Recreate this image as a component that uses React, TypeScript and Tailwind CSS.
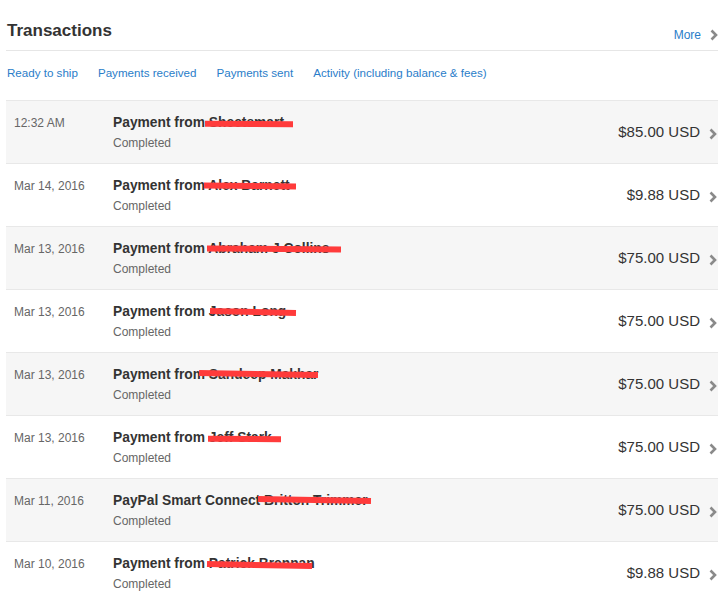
import React from "react";

type Row = {
  date: string;
  prefix: string;
  name: string;
  amount: string;
  bar: { x1: number; x2: number; top: number; rot: number };
};

const rows: Row[] = [
  { date: "12:32 AM", prefix: "Payment from ", name: "Sheetsmart", amount: "$85.00 USD", bar: { x1: 205, x2: 293, top: 6, rot: 0.4 } },
  { date: "Mar 14, 2016", prefix: "Payment from ", name: "Alex Barnett", amount: "$9.88 USD", bar: { x1: 204, x2: 296, top: 5, rot: 0.5 } },
  { date: "Mar 13, 2016", prefix: "Payment from ", name: "Abraham J Collins", amount: "$75.00 USD", bar: { x1: 207, x2: 341, top: 5, rot: 0.5 } },
  { date: "Mar 13, 2016", prefix: "Payment from ", name: "Jason Long", amount: "$75.00 USD", bar: { x1: 210, x2: 296, top: 5, rot: 1.2 } },
  { date: "Mar 13, 2016", prefix: "Payment from ", name: "Sandeep Makhar", amount: "$75.00 USD", bar: { x1: 199, x2: 318, top: 4, rot: 1 } },
  { date: "Mar 13, 2016", prefix: "Payment from ", name: "Jeff Stark", amount: "$75.00 USD", bar: { x1: 208, x2: 281, top: 6, rot: 0.5 } },
  { date: "Mar 11, 2016", prefix: "PayPal Smart Connect ", name: "Britton Trimmer", amount: "$75.00 USD", bar: { x1: 258, x2: 371, top: 4, rot: 1 } },
  { date: "Mar 10, 2016", prefix: "Payment from ", name: "Patrick Brennan", amount: "$9.88 USD", bar: { x1: 207, x2: 312, top: 6, rot: 1 } },
];

function Chevron({ className = "" }: { className?: string }) {
  return (
    <svg width="8" height="12" viewBox="0 0 8 12" className={className}>
      <path d="M1.5 1.5 L6 6 L1.5 10.5" fill="none" stroke="#8a8a8a" strokeWidth="2.6" strokeLinecap="butt" strokeLinejoin="miter" />
    </svg>
  );
}

export default function App() {
  return (
    <div
      className="w-[728px] h-[608px] bg-white overflow-hidden text-[#333]"
      style={{ fontFamily: '"Liberation Sans", Arial, sans-serif' }}
    >
      <div className="ml-[6px] w-[712px]">
        <div className="flex items-end justify-between h-[51px] border-b border-[#e6e6e6] pb-[8px]">
          <div className="text-[17px] font-bold text-[#333] leading-[22px] pl-[1px]">Transactions</div>
          <div className="flex items-center gap-[9px]">
            <span className="text-[12px] text-[#2a7dc9] leading-[14px]">More</span>
            <Chevron />
          </div>
        </div>
        <div className="flex items-center gap-[20px] h-[49px] pl-[1px] text-[11.6px] text-[#2a7dc9] pb-[5px]">
          <span>Ready to ship</span>
          <span>Payments received</span>
          <span>Payments sent</span>
          <span>Activity (including balance &amp; fees)</span>
        </div>
        <div>
          {rows.map((r, i) => (
            <div
              key={i}
              className={`flex h-[63px] border-t border-[#e8e8e8] ${i % 2 === 0 ? "bg-[#f6f6f6]" : "bg-white"}`}
            >
              <div className="w-[107px] pl-[8px] pt-[15px] text-[12px] text-[#666] leading-[15px]">{r.date}</div>
              <div className="flex-1 pt-[14px]">
                <div className="relative text-[13.8px] font-bold text-[#333] leading-[16px] whitespace-nowrap">
                  {r.prefix}
                  {r.name}
                  <span
                    className="absolute h-[6px] bg-[#ff3b3b]"
                    style={{
                      left: r.bar.x1 - 113,
                      width: r.bar.x2 - r.bar.x1,
                      top: r.bar.top,
                      transform: `rotate(${r.bar.rot}deg)`,
                    }}
                  />
                </div>
                <div className="text-[12px] text-[#666] leading-[14px] mt-[5px]">Completed</div>
              </div>
              <div className="flex items-center gap-[9px] pr-[1px]">
                <span className="text-[15px] text-[#333]">{r.amount}</span>
                <Chevron className="mt-[3px]" />
              </div>
            </div>
          ))}
        </div>
      </div>
    </div>
  );
}
